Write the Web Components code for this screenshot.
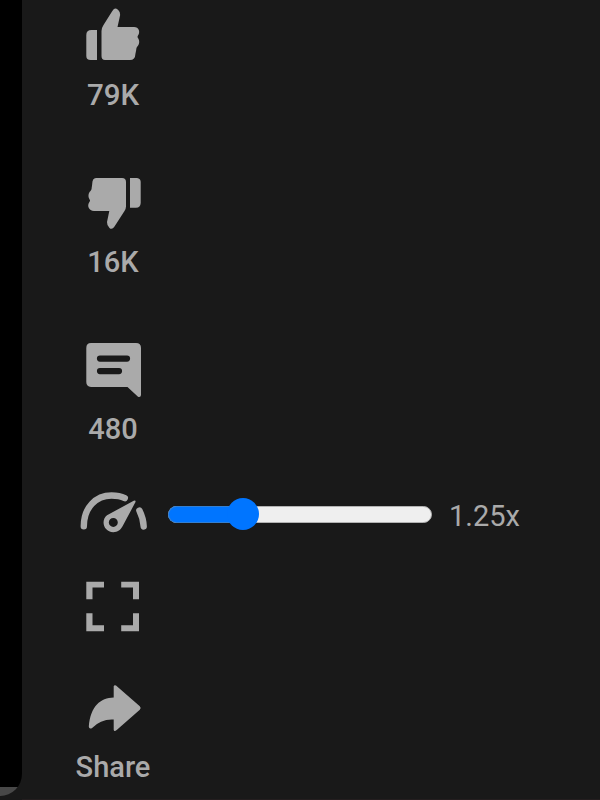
<!DOCTYPE html>
<html lang="en"><head><meta charset="utf-8"><title>Player actions</title>
<style>html,body{margin:0;background:#191919}body{width:600px;height:800px;overflow:hidden;font-family:Roboto,"Liberation Sans",sans-serif;color:#aaa}</style></head>
<body><shorts-page></shorts-page>
<script>
const art = {
  like: '<path d="M91.5 30H97V60H90.5Q86.3 60 86.3 56V35Q86.3 30 91.5 30Z"/><path d="M101.5 31Q101.5 28 103.5 25L112 11.5Q113.3 8.8 115 8.4Q118.5 8.6 119.8 12.5Q120.6 14.5 119.5 18L117.5 27H134C139 27 140.5 32 138 35.5C137.4 36.5 137.4 37.2 138 38C140 41 139.5 44.5 137 47C136.3 48 136.4 48.7 136.2 50Q135.8 52 135.4 54Q135.2 60 130 60H105Q101.5 60 101.5 56Z"/>',
  dislike: '<path d="M130 13H137Q140.7 13.5 140.7 17V38Q140.5 42.5 136 42.8H130Z"/><path d="M96 13H122Q126 13 126 17V41.5Q126 43.5 124.5 46L114.5 61.5Q112 65.3 109.5 63Q106.8 60.5 107 57L109.3 46H94C88.8 46 86.7 40.5 89.4 37C90.2 36 90.2 35.5 89.6 34.5C87.8 31.5 88.3 28 90.5 26C91.6 24.7 91.6 24 91.7 22.5Q92 21 92.2 19Q92.3 13 96 13Z"/>',
  comments: '<path d="M91 13H136Q141 13 141 18V65Q140.8 67.5 138 66.7L127.5 56.8H91Q86.3 56.8 86.3 52V18Q86.3 13 91 13Z"/><path d="M100 28.5H127M100 41H119" fill="none" stroke="#191919" stroke-width="6.2" stroke-linecap="round"/>',
  speed: '<path d="M83.8 45.8C83.8 27 96 15 111.5 15Q119.5 15 124.8 17.6M139.4 30Q143.4 38 143.7 46" fill="none" stroke="currentColor" stroke-width="6.4" stroke-linecap="round"/><path fill-rule="evenodd" d="M133.7 20.2Q136 19.3 135.5 21.5L122.7 45.5C120.8 49.3 117.5 51.7 113.3 51.7C103.7 51.5 100.4 40 107 34.8ZM113.3 37.4A4.5 4.5 0 1 0 113.3 46.4A4.5 4.5 0 1 0 113.3 37.4Z"/>',
  full: '<path d="M86.3 11.7H104V17.6H92.5V29.3H86.3ZM121.2 11.7H139V29.3H133V17.6H121.2ZM86.3 43.3H92.5V55.2H104V61.2H86.3ZM133 43.3H139V61.2H121.2V55.2H133Z"/>',
  share: '<path d="M113.7 11.3Q114.3 9.6 116 10.5L139.8 31.3Q141.6 33 139.8 34.7L117 54.8Q114 57.4 113.7 54.8V44.5Q101 43.7 91.8 53.2Q89 54.4 88.8 51.5C90.5 31 100.5 22.6 113.7 22.4Z"/>'
};
const artTop = {dislike:2, comments:3.9, speed:-0.5};
class ActionIcon extends HTMLElement {
  connectedCallback(){
    const name=this.getAttribute('name');
    this.attachShadow({mode:'open'}).innerHTML = `<style>:host{display:block;width:90px;height:70px;color:#aaa}svg{display:block;fill:currentColor}</style><svg width="90" height="70" viewBox="70 ${artTop[name]||0} 90 70" aria-hidden="true">${art[name]}</svg>`;
  }
}
class ActionItem extends HTMLElement {
  connectedCallback(){
    this.attachShadow({mode:'open'}).innerHTML = `<style>:host{display:flex;flex-direction:column;width:86px;height:120px;align-items:flex-start}.label{width:86px;text-align:center;font-weight:500;font-size:29px;line-height:34px;margin-top:8px}:host([icon=share]) .label{margin-top:5px}:host([icon=like]) .label{font-size:29.5px}</style><action-icon name="${this.getAttribute('icon')}"></action-icon><div class="label"><slot></slot></div>`;
  }
}
class SpeedSlider extends HTMLElement {
  connectedCallback(){
    this.attachShadow({mode:'open'}).innerHTML = `<style>:host{display:flex;align-items:center;width:264px;height:34px}.track{box-sizing:border-box;width:264px;height:17px;border:1.5px solid #b2b2b2;border-radius:9px;background:#efefef;display:flex;align-items:center}.fill{width:75px;height:17px;margin-left:-1px;background:#0075ff;border-radius:9px 0 0 9px;display:flex;align-items:center;justify-content:flex-end;flex:none;box-sizing:border-box;border:1px solid #347fd0;border-right:0}.thumb{width:32px;height:32px;border-radius:50%;background:#0075ff;flex:none;margin-right:-16px}</style><div class="track"><div class="fill"><div class="thumb"></div></div></div>`;
  }
}
class SpeedRow extends HTMLElement {
  connectedCallback(){
    this.attachShadow({mode:'open'}).innerHTML = `<style>:host{display:flex;align-items:flex-start}speed-slider{margin:17px 17px 0 8px}.value{font-size:29px;line-height:36px;margin-top:18px}</style><action-icon name="speed"></action-icon><speed-slider></speed-slider><div class="value"><slot></slot></div>`;
  }
}
class ShortsPage extends HTMLElement {
  connectedCallback(){
    this.attachShadow({mode:'open'}).innerHTML = `<style>:host{display:grid;grid-template-columns:22px 1fr;height:800px;background:#191919}.player{height:796px;background:linear-gradient(#000 787px,#484848 787px);border-radius:0 0 22px 0}.rail{display:grid;grid-template-rows:167px 167px 146px 90px 105px 125px;padding-left:48px;border-bottom:1px solid #241e1f;box-sizing:border-box;height:800px}</style>
    <div class="player"></div><div class="rail"><action-item icon="like">79K</action-item><action-item icon="dislike">16K</action-item><action-item icon="comments">480</action-item><speed-row>1.25x</speed-row><action-icon name="full"></action-icon><action-item icon="share">Share</action-item></div>`;
  }
}
customElements.define('action-icon',ActionIcon);
customElements.define('action-item',ActionItem);
customElements.define('speed-slider',SpeedSlider);
customElements.define('speed-row',SpeedRow);
customElements.define('shorts-page',ShortsPage);
</script></body></html>
